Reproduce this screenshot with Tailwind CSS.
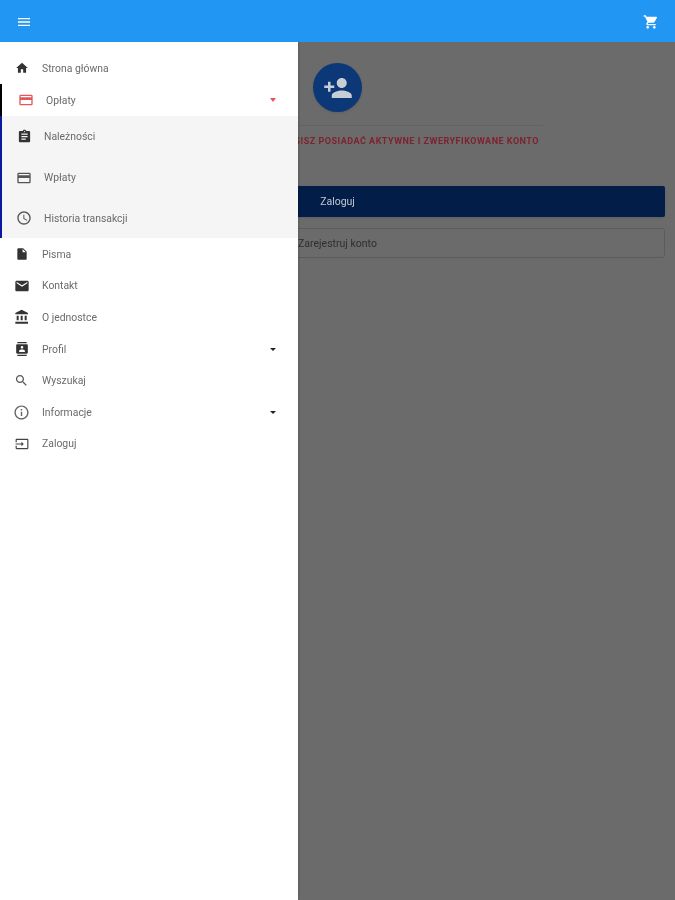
<!DOCTYPE html>
<html lang="pl">
<head>
<meta charset="utf-8">
<script src="https://cdn.jsdelivr.net/npm/@tailwindcss/browser@4"></script>
</head>
<body class="font-['Roboto',sans-serif]">
<div class="w-[675px] h-[900px] flex flex-col overflow-hidden">
  <header class="h-[42px] shrink-0 bg-[#2196f3] flex items-center justify-between pt-[1px] pl-[16px] pr-[16px] relative z-20 blur-[0.4px]">
    <svg class="w-[16px] h-[16px]" viewBox="0 0 24 24" fill="#fff"><path d="M3 18h18v-2H3v2zm0-5h18v-2H3v2zm0-7v2h18V6H3z"/></svg>
    <svg class="w-[16px] h-[16px]" viewBox="0 0 24 24" fill="#fff"><path d="M7 18c-1.1 0-1.99.9-1.99 2S5.9 22 7 22s2-.9 2-2-.9-2-2-2zM1 2v2h2l3.6 7.59-1.35 2.45c-.16.28-.25.61-.25.96 0 1.1.9 2 2 2h12v-2H7.42c-.14 0-.25-.11-.25-.25l.03-.12.9-1.63h7.45c.75 0 1.41-.41 1.75-1.03l3.58-6.49c.08-.14.12-.31.12-.48 0-.55-.45-1-1-1H5.21l-.94-2H1zm16 16c-1.1 0-1.99.9-1.99 2s.89 2 1.99 2 2-.9 2-2-.9-2-2-2z"/></svg>
  </header>
  <main class="relative flex-1 bg-[#6b6b6b]">
    <div class="flex flex-col items-center px-[10px] pt-[21px] blur-[0.6px]">
      <div class="w-[49px] h-[49px] rounded-full bg-[#0c3878] flex items-center justify-center shadow-sm">
        <svg class="w-[30px] h-[30px]" viewBox="0 0 24 24" fill="#c9ced6"><path d="M15 12c2.21 0 4-1.79 4-4s-1.79-4-4-4-4 1.79-4 4 1.79 4 4 4zm-9-2V7H4v3H1v2h3v3h2v-3h3v-2H6zm9 4c-2.67 0-8 1.34-8 4v2h16v-2c0-2.66-5.33-4-8-4z"/></svg>
      </div>
      <div class="self-start w-[533px] h-px bg-[#636363] mt-[13px]"></div>
      <p class="self-start w-[529px] text-right mt-[9px] h-[12px] leading-[12px] text-[9px] font-bold tracking-[0.5px] text-[#7e2230] whitespace-nowrap">MUSISZ POSIADAĆ AKTYWNE I ZWERYFIKOWANE KONTO</p>
      <button class="mt-[39px] w-full h-[31px] bg-[#021e48] rounded-[2px] text-[10.5px] text-[#c4c8cf] shadow-sm">Zaloguj</button>
      <button class="mt-[11px] w-full h-[30px] pt-[1px] border border-[#5c5c5c] rounded-[3px] text-[10.5px] text-[#2e2e2e]">Zarejestruj konto</button>
    </div>
    <nav class="absolute inset-y-0 left-0 w-[298px] bg-white shadow-[1px_0_2px_rgba(0,0,0,0.15)] pt-[10px] text-[10.4px] text-[#6a6a6a] blur-[0.5px] z-10">
      <div class="h-[32px] flex items-center pl-[15px]">
        <svg class="w-[14px] h-[14px] shrink-0" viewBox="0 0 24 24" fill="#333"><path d="M10 20v-6h4v6h5v-8h3L12 3 2 12h3v8z"/></svg>
        <span class="ml-[13px] pt-[1px]">Strona główna</span>
      </div>
      <div class="h-[32px] flex items-center pl-[16px] pr-[22px] border-l-2 border-black">
        <svg class="w-[16px] h-[16px] shrink-0" viewBox="0 0 24 24" fill="#e2575c"><path d="M20 4H4c-1.11 0-1.99.89-1.99 2L2 18c0 1.11.89 2 2 2h16c1.11 0 2-.89 2-2V6c0-1.11-.89-2-2-2zm0 14H4v-6h16v6zm0-10H4V6h16v2z"/></svg>
        <span class="ml-[12px] flex-1 pt-[1px]">Opłaty</span>
        <span class="w-0 h-0 border-x-[3px] border-x-transparent border-t-[4px] border-t-[#e2575c]"></span>
      </div>
      <div class="h-[122px] flex flex-col bg-[#f5f5f5] border-l-2 border-[#0a1aa0]">
        <div class="h-[41px] flex items-center pl-[15px]">
          <svg class="w-[15px] h-[15px] shrink-0" viewBox="0 0 24 24" fill="#333"><path d="M19 3h-4.18C14.4 1.84 13.3 1 12 1s-2.4.84-2.82 2H5c-1.1 0-2 .9-2 2v14c0 1.1.9 2 2 2h14c1.1 0 2-.9 2-2V5c0-1.1-.9-2-2-2zm-7 0c.55 0 1 .45 1 1s-.45 1-1 1-1-.45-1-1 .45-1 1-1zm2 14H7v-2h7v2zm3-4H7v-2h10v2zm0-4H7V7h10v2z"/></svg>
          <span class="ml-[12px]">Należności</span>
        </div>
        <div class="h-[41px] flex items-center pl-[14px]">
          <svg class="w-[16px] h-[16px] shrink-0" viewBox="0 0 24 24" fill="#555"><path d="M20 4H4c-1.11 0-1.99.89-1.99 2L2 18c0 1.11.89 2 2 2h16c1.11 0 2-.89 2-2V6c0-1.11-.89-2-2-2zm0 14H4v-6h16v6zm0-10H4V6h16v2z"/></svg>
          <span class="ml-[12px]">Wpłaty</span>
        </div>
        <div class="h-[40px] flex items-center pl-[14px]">
          <svg class="w-[16px] h-[16px] shrink-0" viewBox="0 0 24 24" fill="#555"><path d="M11.99 2C6.47 2 2 6.48 2 12s4.47 10 9.99 10C17.52 22 22 17.52 22 12S17.52 2 11.99 2zM12 20c-4.42 0-8-3.58-8-8s3.58-8 8-8 8 3.58 8 8-3.58 8-8 8zm.5-13H11v6l5.25 3.15.75-1.23-4.5-2.67z"/></svg>
          <span class="ml-[12px] pt-[1px]">Historia transakcji</span>
        </div>
      </div>
      <div class="h-[32px] flex items-center pl-[15px]">
        <svg class="w-[14px] h-[14px] shrink-0" viewBox="0 0 24 24" fill="#333"><path d="M6 2c-1.1 0-1.99.9-1.99 2L4 20c0 1.1.89 2 1.99 2H18c1.1 0 2-.9 2-2V8l-6-6H6zm7 7V3.5L18.5 9H13z"/></svg>
        <span class="ml-[13px] pt-[1px]">Pisma</span>
      </div>
      <div class="h-[31px] flex items-center pl-[14px]">
        <svg class="w-[16px] h-[16px] shrink-0" viewBox="0 0 24 24" fill="#333"><path d="M20 4H4c-1.1 0-1.99.9-1.99 2L2 18c0 1.1.9 2 2 2h16c1.1 0 2-.9 2-2V6c0-1.1-.9-2-2-2zm0 4l-8 5-8-5V6l8 5 8-5v2z"/></svg>
        <span class="ml-[12px]">Kontakt</span>
      </div>
      <div class="h-[32px] flex items-center pl-[14px]">
        <svg class="w-[16px] h-[16px] shrink-0" viewBox="0 0 24 24" fill="#333"><path d="M4 10v7h3v-7H4zm6 0v7h3v-7h-3zM2 22h19v-3H2v3zm14-12v7h3v-7h-3zM11.5 1L2 6v2h19V6l-9.5-5z"/></svg>
        <span class="ml-[12px] pt-[1px]">O jednostce</span>
      </div>
      <div class="h-[32px] flex items-center pl-[15px] pr-[22px]">
        <svg class="w-[14px] h-[14px] shrink-0" viewBox="0 0 24 24" fill="#333"><path d="M20 0H4v2h16V0zM4 24h16v-2H4v2zM20 4H4c-1.1 0-2 .9-2 2v12c0 1.1.9 2 2 2h16c1.1 0 2-.9 2-2V6c0-1.1-.9-2-2-2zm-8 2.75c1.24 0 2.25 1.01 2.25 2.25s-1.01 2.25-2.25 2.25S9.75 10.24 9.75 9 10.76 6.75 12 6.75zM17 17H7v-1.5c0-1.67 3.33-2.5 5-2.5s5 .83 5 2.5V17z"/></svg>
        <span class="ml-[13px] flex-1 pt-[1px]">Profil</span>
        <span class="w-0 h-0 border-x-[3px] border-x-transparent border-t-[3px] border-t-[#222]"></span>
      </div>
      <div class="h-[31px] flex items-center pl-[14px]">
        <svg class="w-[15px] h-[15px] shrink-0" viewBox="0 0 24 24" fill="#555"><path d="M15.5 14h-.79l-.28-.27C15.41 12.59 16 11.11 16 9.5 16 5.91 13.09 3 9.5 3S3 5.91 3 9.5 5.91 16 9.5 16c1.61 0 3.09-.59 4.23-1.57l.27.28v.79l5 4.99L20.49 19l-4.99-5zm-6 0C7.01 14 5 11.99 5 9.5S7.01 5 9.5 5 14 7.01 14 9.5 11.99 14 9.5 14z"/></svg>
        <span class="ml-[13px]">Wyszukaj</span>
      </div>
      <div class="h-[32px] flex items-center pl-[13px] pr-[22px]">
        <svg class="w-[17px] h-[17px] shrink-0" viewBox="0 0 24 24" fill="#666"><path d="M11 7h2v2h-2zm0 4h2v6h-2zm1-9C6.48 2 2 6.48 2 12s4.48 10 10 10 10-4.48 10-10S17.52 2 12 2zm0 18c-4.41 0-8-3.59-8-8s3.59-8 8-8 8 3.59 8 8-3.59 8-8 8z"/></svg>
        <span class="ml-[12px] flex-1 pt-[1px]">Informacje</span>
        <span class="w-0 h-0 border-x-[3px] border-x-transparent border-t-[3px] border-t-[#222]"></span>
      </div>
      <div class="h-[31px] flex items-center pl-[15px]">
        <svg class="w-[14px] h-[14px] shrink-0" viewBox="0 0 24 24" fill="#444"><path d="M21 3.01H3c-1.1 0-2 .9-2 2V9h2V4.99h18v14.03H3V15H1v4.01c0 1.1.9 1.98 2 1.98h18c1.1 0 2-.88 2-1.98v-14c0-1.11-.9-2-2-2zM11 16l4-4-4-4v3H1v2h10v3z"/></svg>
        <span class="ml-[13px]">Zaloguj</span>
      </div>
    </nav>
  </main>
</div>
</body>
</html>
